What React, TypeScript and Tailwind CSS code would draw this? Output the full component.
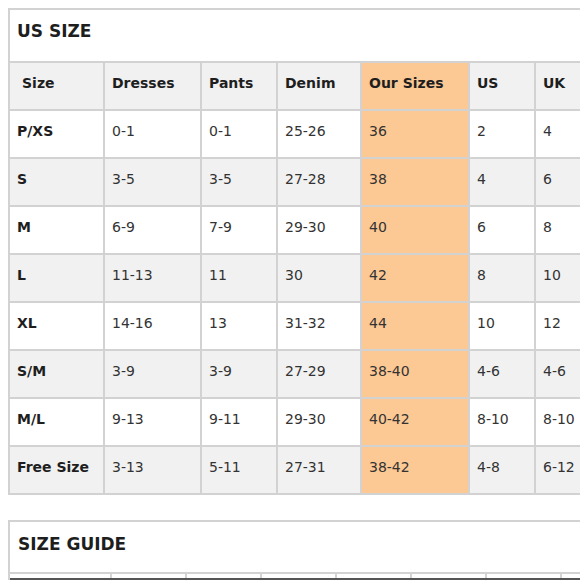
import React from "react";

const cols = ["w-[93px]", "w-[97px]", "w-[76px]", "w-[84px]", "w-[108px]", "w-[66px]", "w-[112px]"];

const header = ["Size", "Dresses", "Pants", "Denim", "Our Sizes", "US", "UK"];
const rows: string[][] = [
  ["P/XS", "0-1", "0-1", "25-26", "36", "2", "4"],
  ["S", "3-5", "3-5", "27-28", "38", "4", "6"],
  ["M", "6-9", "7-9", "29-30", "40", "6", "8"],
  ["L", "11-13", "11", "30", "42", "8", "10"],
  ["XL", "14-16", "13", "31-32", "44", "10", "12"],
  ["S/M", "3-9", "3-9", "27-29", "38-40", "4-6", "4-6"],
  ["M/L", "9-13", "9-11", "29-30", "40-42", "8-10", "8-10"],
  ["Free Size", "3-13", "5-11", "27-31", "38-42", "4-8", "6-12"],
];

function Row({ cells, gray, head }: { cells: string[]; gray: boolean; head?: boolean }) {
  return (
    <div className="flex h-[48px] border-t-2 border-[#d2d2d2]">
      {cells.map((c, i) => {
        const bg = i === 4 ? "bg-[#fcc894]" : gray ? "bg-[#f1f1f1]" : "bg-white";
        const border = i === 0 ? "" : "border-l-2 border-[#d2d2d2]";
        const weight = head || i === 0 ? "font-bold text-[#1e1e1e]" : "text-[#333333]";
        const pad = head && i === 0 ? "pl-[12px]" : "pl-[7px]";
        return (
          <div
            key={i}
            className={`${cols[i]} shrink-0 ${bg} ${border} ${weight} ${pad} flex items-center pb-[6px] text-[14px] whitespace-nowrap`}
          >
            {c}
          </div>
        );
      })}
    </div>
  );
}

export default function App() {
  const guideCols = ["w-[100px]", "w-[75px]", "w-[75px]", "w-[75px]", "w-[75px]", "w-[75px]", "w-[75px]", "w-[75px]"];
  return (
    <div
      className="w-[580px] h-[580px] overflow-hidden bg-white"
      style={{ fontFamily: '"DejaVu Sans", Verdana, sans-serif' }}
    >
      <div className="ml-[8px] mt-[8px] w-[650px] border-2 border-[#d2d2d2]">
        <div className="h-[51px] flex items-center pl-[7px] pb-[7px] text-[17px] font-bold text-[#1e1e1e]">
          US SIZE
        </div>
        <Row cells={header} gray head />
        {rows.map((r, i) => (
          <Row key={i} cells={r} gray={i % 2 === 1} />
        ))}
      </div>

      <div className="ml-[8px] mt-[25px] w-[650px] border-x-2 border-t-2 border-[#d2d2d2]">
        <div className="h-[50px] flex items-center pl-[8px] pb-[4px] text-[17px] font-bold text-[#1e1e1e]">
          SIZE GUIDE
        </div>
        <div className="flex h-[6px] border-t-2 border-[#d2d2d2]">
          {guideCols.map((w, i) => (
            <div key={i} className={`${w} shrink-0 ${i === 0 ? "" : "border-l-2 border-[#d2d2d2]"}`} />
          ))}
        </div>
        <div className="h-[4px] bg-[#555555]" />
      </div>
    </div>
  );
}
